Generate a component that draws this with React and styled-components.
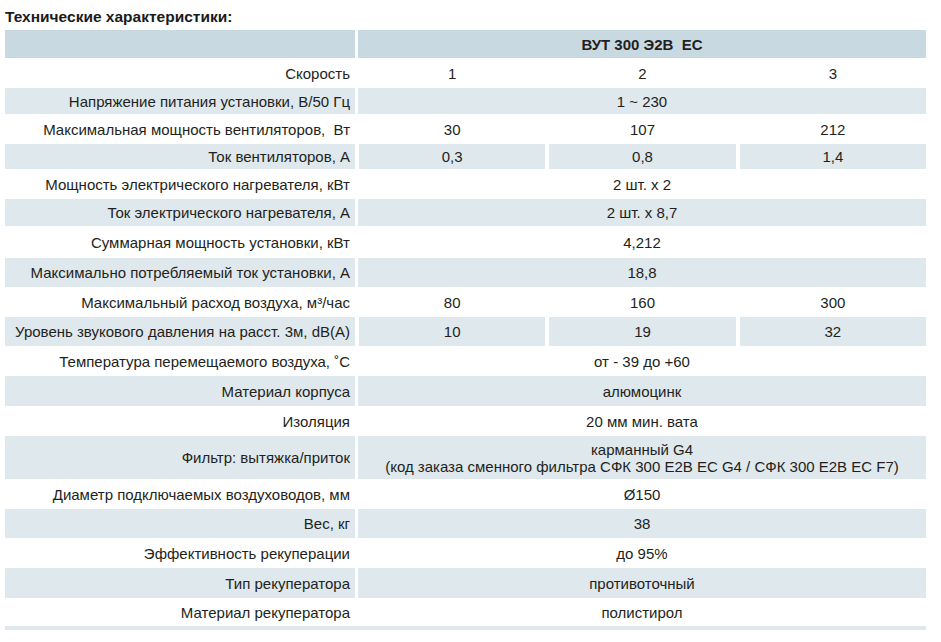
import React from "react";
import styled, { createGlobalStyle } from "styled-components";

const Global = createGlobalStyle`
  html, body { margin: 0; padding: 0; background: #fff; }
  body { font-family: "Liberation Sans", Arial, sans-serif; color: #231f20; }
`;

const Page = styled.div`
  width: 941px;
  height: 642px;
  overflow: hidden;
  padding: 9px 0 0 5px;
  box-sizing: border-box;
`;

const Title = styled.h1`
  margin: 0;
  height: 21px;
  font-size: 15.5px;
  font-weight: 700;
  line-height: 16px;
  color: #1a1a1a;
`;

const Table = styled.div`
  width: 921px;
  display: flex;
  flex-direction: column;
`;

const Row = styled.div`
  display: grid;
  grid-template-columns: 350px 1fr 1fr 1fr;
  column-gap: 4px;
  height: ${(p) => p.$h}px;
`;

const Cell = styled.div`
  display: flex;
  flex-direction: column;
  align-items: ${(p) => (p.$label ? "flex-end" : "center")};
  justify-content: center;
  text-align: ${(p) => (p.$label ? "right" : "center")};
  padding-right: ${(p) => (p.$label ? "5px" : "0")};
  font-size: 15px;
  line-height: 17px;
  white-space: pre;
  grid-column: ${(p) => (p.$span ? `span ${p.$span}` : "auto")};
  background: ${(p) =>
    p.$tone === "head" ? "#c9d9e2" : p.$tone === "grey" ? "#dee8ed" : "transparent"};
  font-weight: ${(p) => (p.$bold ? 700 : 400)};
  margin-left: ${(p) => (p.$shift ? `-${p.$shift}px` : "0")};
`;

const Strip = styled.div`
  height: 4px;
  background: #dee8ed;
`;

const rows = [
  { l: "Скорость", v: ["1", "2", "3"], h: 30 },
  { l: "Напряжение питания установки, В/50 Гц", v: ["1 ~ 230"], h: 26 },
  { l: "Максимальная мощность вентиляторов,  Вт", v: ["30", "107", "212"], h: 30 },
  { l: "Ток вентиляторов, А", v: ["0,3", "0,8", "1,4"], h: 25 },
  { l: "Мощность электрического нагревателя, кВт", v: ["2 шт. х 2"], h: 30 },
  { l: "Ток электрического нагревателя, А", v: ["2 шт. х 8,7"], h: 27 },
  { l: "Суммарная мощность установки, кВт", v: ["4,212"], h: 32 },
  { l: "Максимально потребляемый ток установки, А", v: ["18,8"], h: 29 },
  { l: "Максимальный расход воздуха, м³/час", v: ["80", "160", "300"], h: 30 },
  { l: "Уровень звукового давления на расст. 3м, dB(A)", v: ["10", "19", "32"], h: 29 },
  { l: "Температура перемещаемого воздуха, ˚C", v: ["от - 39 до +60"], h: 30 },
  { l: "Материал корпуса", v: ["алюмоцинк"], h: 30 },
  { l: "Изоляция", v: ["20 мм мин. вата"], h: 30 },
  {
    l: "Фильтр: вытяжка/приток",
    v: ["карманный G4\n(код заказа сменного фильтра СФК 300 E2B EC G4 / СФК 300 E2B EC F7)"],
    h: 43,
  },
  { l: "Диаметр подключаемых воздуховодов, мм", v: ["Ø150"], h: 30 },
  { l: "Вес, кг", v: ["38"], h: 29 },
  { l: "Эффективность рекуперации", v: ["до 95%"], h: 30 },
  { l: "Тип рекуператора", v: ["противоточный"], h: 30 },
  { l: "Материал рекуператора", v: ["полистирол"], h: 28 },
];

export default function App() {
  return (
    <>
      <Global />
      <Page>
        <Title>Технические характеристики:</Title>
        <Table>
          <Row $h={28}>
            <Cell $label $tone="head" />
            <Cell $tone="head" $span={3} $bold $shift={1}>
              {"ВУТ 300 Э2В  ЕС"}
            </Cell>
          </Row>
          {rows.map((r, i) => {
            const tone = i % 2 === 1 ? "grey" : "white";
            return (
              <Row key={i} $h={r.h}>
                <Cell $label $tone={tone}>{r.l}</Cell>
                {r.v.length === 1 ? (
                  <Cell $tone={tone} $span={3} $shift={1}>{r.v[0]}</Cell>
                ) : (
                  r.v.map((v, j) => (
                    <Cell key={j} $tone={tone}>{v}</Cell>
                  ))
                )}
              </Row>
            );
          })}
          <Strip />
        </Table>
      </Page>
    </>
  );
}
